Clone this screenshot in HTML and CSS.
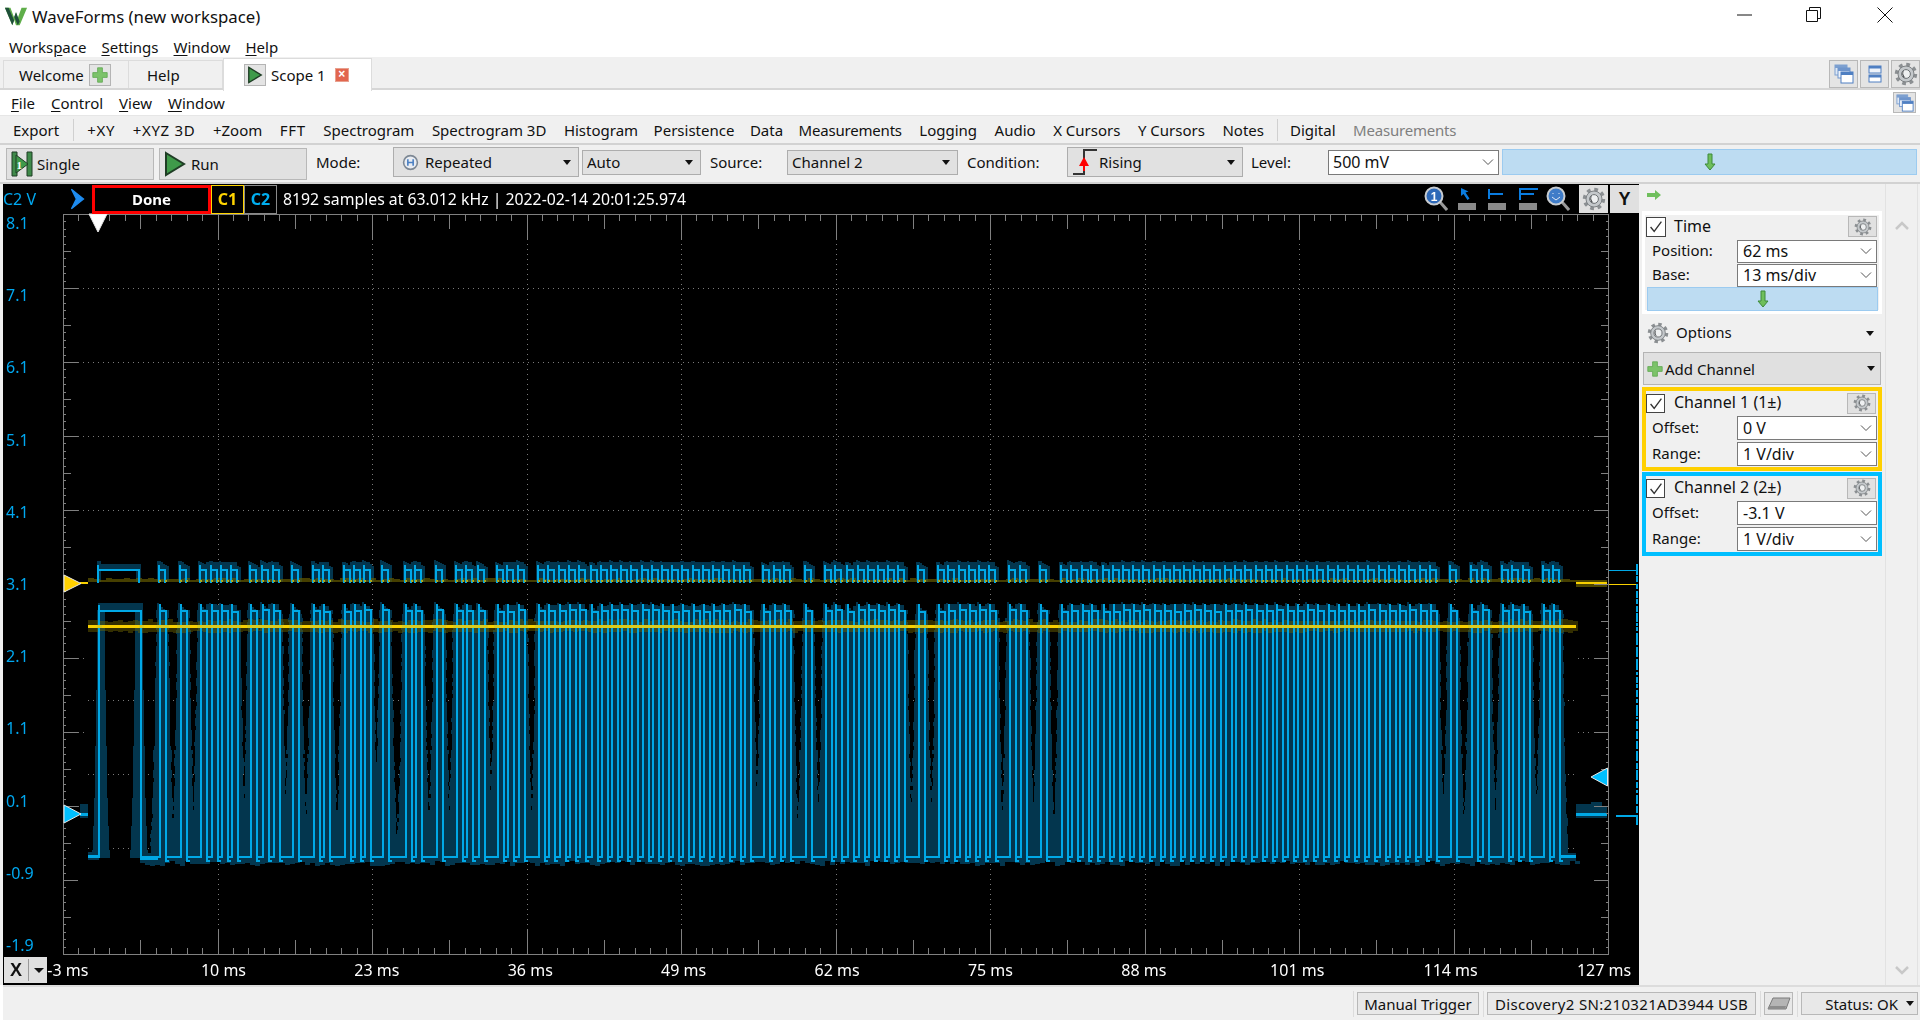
FILE: index.html
```html
<!DOCTYPE html>
<html lang="en">
<head>
<meta charset="utf-8">
<title>WaveForms</title>
<link rel="stylesheet" href="styles.css">
</head>
<body>
<svg class="defs" width="0" height="0" aria-hidden="true">
  <symbol id="gear" viewBox="0 0 24 24">
    <circle cx="12" cy="12" r="9.2" fill="none" stroke="#8b8f92" stroke-width="4" stroke-dasharray="3.6 3.62"/>
    <circle cx="12" cy="12" r="8" fill="#c4c8cb" stroke="#7d8184" stroke-width="1"/>
    <circle cx="12" cy="12" r="4.4" fill="#eef0f1" stroke="#6d7174" stroke-width="1"/>
    <path d="M10 8.6a4 4 0 0 0 1.4 7.2a6 6 0 0 1-1.4-7.2z" fill="#3a3d40"/>
  </symbol>
  <symbol id="chev" viewBox="0 0 12 8"><path d="M1 1.5l5 5 5-5" fill="none" stroke="#555" stroke-width="1"/></symbol>
  <symbol id="plus" viewBox="0 0 20 20"><path d="M7 1h6v6h6v6h-6v6H7v-6H1V7h6z" fill="#7cc36a" stroke="#5fa750" stroke-width="1"/></symbol>
  <symbol id="down" viewBox="0 0 12 18"><path d="M4 1h4v10h3l-5 6-5-6h3z" fill="#6fbf5c" stroke="#3c8a3a" stroke-width="1"/></symbol>
  <symbol id="run" viewBox="0 0 22 26"><path d="M2 2l18 11L2 24z" fill="#3f9a4a" stroke="#1f3d25" stroke-width="2"/></symbol>
  <symbol id="win" viewBox="0 0 20 20">
    <rect x="1" y="1" width="12" height="10" fill="#dfe8f5" stroke="#7da0d0"/><rect x="1" y="1" width="12" height="3" fill="#7da0d0"/>
    <rect x="4" y="4" width="12" height="10" fill="#eef3fa" stroke="#6f95cc"/><rect x="4" y="4" width="12" height="3" fill="#6f95cc"/>
    <rect x="7" y="8" width="12" height="11" fill="#fff" stroke="#4f7fc2"/><rect x="7" y="8" width="12" height="3" fill="#4f7fc2"/>
  </symbol>
</svg>

<header class="titlebar">
  <svg class="logo" viewBox="0 0 26 22"><path d="M1 2h6l4 11 2-6 2 6 4-11h6l-8 19h-4l-2-6-2 6H9z" fill="#5fae4a"/><path d="M1 2h4l6 14-2 5z M13 7l4 10-2 4-4-9z" fill="#1f4f3a"/></svg>
  <span class="title">WaveForms (new workspace)</span>
  <div class="winctl">
    <svg viewBox="0 0 16 16" class="wc wc-min"><path d="M0 8h15" stroke="#111" fill="none"/></svg>
    <svg viewBox="0 0 16 16" class="wc wc-max"><path d="M3.5 3.5V.5h11v11h-3M.5 3.5h11v11H.5z" stroke="#111" fill="none"/></svg>
    <svg viewBox="0 0 16 16" class="wc wc-close"><path d="M.5.5l15 15M15.500.5l-15 15" stroke="#111" fill="none"/></svg>
  </div>
</header>

<nav class="menubar">
  <span>Works<u>p</u>ace</span><span><u>S</u>ettings</span><span><u>W</u>indow</span><span><u>H</u>elp</span>
</nav>

<div class="tabbar">
  <div class="tab tab-welcome">Welcome<span class="tabbtn"><svg class="ico16"><use href="#plus"/></svg></span></div>
  <div class="tab tab-help">Help</div>
  <div class="tab tab-active"><span class="tabbtn tabbtn-run"><svg class="ico-run-small"><use href="#run"/></svg></span><span class="tabname">Scope 1</span><span class="tabclose">×</span></div>
  <div class="tab-right">
    <span class="sqbtn"><svg class="ico20"><use href="#win"/></svg></span>
    <span class="sqbtn"><svg class="ico20" viewBox="0 0 20 20"><rect x="4" y="2" width="12" height="7" fill="#eef3fa" stroke="#4f7fc2"/><rect x="4" y="2" width="12" height="2.500" fill="#4f7fc2"/><rect x="4" y="11" width="12" height="7" fill="#fff" stroke="#4f7fc2"/><rect x="4" y="11" width="12" height="2.500" fill="#4f7fc2"/></svg></span>
    <span class="sqbtn"><svg class="ico24"><use href="#gear"/></svg></span>
  </div>
</div>

<nav class="filemenu">
  <span><u>F</u>ile</span><span><u>C</u>ontrol</span><span><u>V</u>iew</span><span><u>W</u>indow</span>
  <span class="sqbtn sqbtn-win"><svg class="ico20"><use href="#win"/></svg></span>
</nav>

<nav class="toolbar">
  <span>Export</span><i class="vsep"></i><span class="roomy">+XY</span><span class="roomy">+XYZ 3D</span><span>+Zoom</span><span class="roomy">FFT</span><span>Spectrogram</span><span>Spectrogram 3D</span><span>Histogram</span><span class="pull">Persistence</span><span class="pull">Data</span><span class="pull tight">Measurements</span><span>Logging</span><span>Audio</span><span>X Cursors</span><span>Y Cursors</span><span>Notes</span><i class="vsep"></i><span class="pull">Digital</span><span class="disabled tight">Measurements</span>
</nav>

<div class="controls">
  <button class="btn btn-single"><svg class="ico-single" viewBox="0 0 22 26"><path d="M1 1h5v24H1zM16 1h5v24h-5z" fill="#3f8a4a" stroke="#1f3d25"/><path d="M5 4l12 9-12 9z" fill="#3f9a4a" stroke="#1f3d25"/><text x="5.500" y="18" class="digit">1</text></svg>Single</button>
  <button class="btn btn-run"><svg class="ico-run"><use href="#run"/></svg>Run</button>
  <label class="lbl lbl-mode">Mode:</label>
  <div class="combo combo-flat combo-mode"><svg class="ico-mode" viewBox="0 0 16 16"><circle cx="8" cy="8" r="6.500" fill="#e8ecf2" stroke="#7d8894" stroke-width="1.500"/><path d="M5.500 5v6M10.500 5v6M5.500 8h5" stroke="#4a7fc2" stroke-width="1.500" fill="none"/></svg>Repeated<i class="caret"></i></div>
  <div class="combo combo-flat combo-auto">Auto<i class="caret"></i></div>
  <label class="lbl lbl-source">Source:</label>
  <div class="combo combo-flat combo-source">Channel 2<i class="caret"></i></div>
  <label class="lbl lbl-cond">Condition:</label>
  <div class="combo combo-flat combo-cond"><svg class="ico-edge" viewBox="0 0 26 28"><path d="M1 26h11V2h13" fill="none" stroke="#333" stroke-width="2"/><path d="M12 9l5 9H7z" fill="#f00"/><path d="M12 18v5" stroke="#f00" stroke-width="2"/></svg>Rising<i class="caret"></i></div>
  <label class="lbl lbl-level">Level:</label>
  <div class="combo combo-edit combo-level"><span>500 mV</span><svg class="chev"><use href="#chev"/></svg></div>
  <div class="bluebar bluebar-top"><svg class="ico-down"><use href="#down"/></svg></div>
</div>

<main class="main">
  <section class="scope">
    <canvas id="plot" class="plot" width="1636" height="801"></canvas>
    <div class="scope-head">
      <span class="unit">C2 V</span>
      <svg class="chevron" viewBox="0 0 14 18"><path d="M2 1l10 8-10 8 4-8z" fill="#1e8cf0" stroke="#1e8cf0"/></svg>
      <span class="done">Done</span>
      <span class="chip chip-c1">C1</span>
      <span class="chip chip-c2">C2</span>
      <span class="info">8192 samples at 63.012 kHz | 2022-02-14 20:01:25.974</span>
      <div class="head-icons">
        <svg class="hico" viewBox="0 0 24 26"><path d="M16 16l7 8" stroke="#9a9a9a" stroke-width="3"/><circle cx="10" cy="10" r="8.500" fill="#2e69b8" stroke="#c8ccd0" stroke-width="2"/><text x="10" y="14.500" class="lens">1</text></svg>
        <svg class="hico" viewBox="0 0 24 26"><path d="M6 2l0 8 2.500-2 4 6 2-1.500-4-6 3-1z" fill="#0a7ce0"/><rect x="3" y="17" width="18" height="7" fill="#8a8a8a"/></svg>
        <svg class="hico" viewBox="0 0 24 26"><path d="M4 3v10M4 8h14" stroke="#0a7ce0" stroke-width="2" fill="none"/><rect x="3" y="17" width="18" height="7" fill="#8a8a8a"/></svg>
        <svg class="hico" viewBox="0 0 24 26"><path d="M4 2v12M4 3h18M4 8h14" stroke="#0a7ce0" stroke-width="2" fill="none"/><rect x="3" y="17" width="18" height="7" fill="#8a8a8a"/></svg>
        <svg class="hico" viewBox="0 0 24 26"><path d="M16 16l7 8" stroke="#9a9a9a" stroke-width="3"/><circle cx="10" cy="10" r="8.500" fill="#3f7cc8" stroke="#c8ccd0" stroke-width="2"/><path d="M6 11l4 3 4-3M7 7v1M13 7v1" stroke="#dfe8f5" fill="none"/></svg>
      </div>
      <span class="headbtn headbtn-gear"><svg class="ico24"><use href="#gear"/></svg></span>
      <span class="headbtn headbtn-y">Y</span>
    </div>
    <div class="plot-body">
      <div class="ylabels"><span>8.1</span><span>7.1</span><span>6.1</span><span>5.1</span><span>4.1</span><span>3.1</span><span>2.1</span><span>1.1</span><span>0.1</span><span>-0.9</span><span>-1.9</span></div>
    </div>
    <div class="xlabels"><span class="xfirst">-3 ms</span><span>10 ms</span><span>23 ms</span><span>36 ms</span><span>49 ms</span><span>62 ms</span><span>75 ms</span><span>88 ms</span><span>101 ms</span><span>114 ms</span><span>127 ms</span></div>
    <div class="xbtn"><b>X</b><i class="caret"></i></div>
  </section>

  <aside class="panel">
    <div class="panel-col">
      <div class="panel-arrow"><svg class="ico-right" viewBox="0 0 16 10"><path d="M1 3h8V0l6 5-6 5V7H1z" fill="#6fbf5c"/></svg></div>
      <div class="box box-time">
        <div class="box-head"><span class="check"><svg viewBox="0 0 20 20"><path d="M4 10l4 5 8-11" fill="none" stroke="#333" stroke-width="1.500"/></svg></span><span class="box-title">Time</span><span class="gearbtn"><svg class="ico18"><use href="#gear"/></svg></span></div>
        <div class="prop prop-tight"><label>Position:</label><div class="combo combo-edit"><span>62 ms</span><svg class="chev"><use href="#chev"/></svg></div></div>
        <div class="prop prop-tight"><label>Base:</label><div class="combo combo-edit"><span>13 ms/div</span><svg class="chev"><use href="#chev"/></svg></div></div>
        <div class="bluebar bluebar-side"><svg class="ico-down"><use href="#down"/></svg></div>
      </div>
      <div class="options"><svg class="ico22"><use href="#gear"/></svg><span>Options</span><i class="caret"></i></div>
      <div class="addch"><svg class="ico16"><use href="#plus"/></svg><span>Add Channel</span><i class="caret"></i></div>
      <div class="box box-ch box-c1">
        <div class="box-head"><span class="check"><svg viewBox="0 0 20 20"><path d="M4 10l4 5 8-11" fill="none" stroke="#333" stroke-width="1.500"/></svg></span><span class="box-title">Channel 1 (1±)</span><span class="gearbtn"><svg class="ico18"><use href="#gear"/></svg></span></div>
        <div class="prop"><label>Offset:</label><div class="combo combo-edit"><span>0 V</span><svg class="chev"><use href="#chev"/></svg></div></div>
        <div class="prop"><label>Range:</label><div class="combo combo-edit"><span>1 V/div</span><svg class="chev"><use href="#chev"/></svg></div></div>
      </div>
      <div class="box box-ch box-c2">
        <div class="box-head"><span class="check"><svg viewBox="0 0 20 20"><path d="M4 10l4 5 8-11" fill="none" stroke="#333" stroke-width="1.500"/></svg></span><span class="box-title">Channel 2 (2±)</span><span class="gearbtn"><svg class="ico18"><use href="#gear"/></svg></span></div>
        <div class="prop"><label>Offset:</label><div class="combo combo-edit"><span>-3.1 V</span><svg class="chev"><use href="#chev"/></svg></div></div>
        <div class="prop"><label>Range:</label><div class="combo combo-edit"><span>1 V/div</span><svg class="chev"><use href="#chev"/></svg></div></div>
      </div>
    </div>
    <div class="scrollcol">
      <svg class="scrollarrow" viewBox="0 0 14 9"><path d="M1 8l6-6 6 6" fill="none" stroke="#c8c8c8" stroke-width="2.500"/></svg>
      <svg class="scrollarrow" viewBox="0 0 14 9"><path d="M1 1l6 6 6-6" fill="none" stroke="#c8c8c8" stroke-width="2.500"/></svg>
    </div>
  </aside>
</main>

<footer class="statusbar">
  <i class="ssep"></i><span class="sbtn sbtn-trigger">Manual Trigger</span>
  <i class="ssep"></i><span class="sbtn sbtn-dev">Discovery2 SN:210321AD3944 USB</span>
  <i class="ssep"></i><span class="sbtn sbtn-ico"><svg class="ico-disk" viewBox="0 0 24 14"><path d="M6 1h17l-4 11H1z" fill="#b5b5b5" stroke="#7a7a7a"/><path d="M1 12l1-3h17l-1 3z" fill="#8d8d8d"/></svg></span>
  <i class="ssep"></i><span class="sbtn sbtn-status">Status: OK<i class="caret"></i></span>
</footer>
<script src="script.js"></script>
</body>
</html>
```

FILE: styles.css
```css
* { box-sizing: border-box; }
html, body { margin: 0; padding: 0; }
body {
  width: 1920px; height: 1020px; overflow: hidden;
  display: flex; flex-direction: column;
  background: #fff; color: #111;
  font: 15px/20px "Noto Sans", sans-serif;
}
.defs { position: absolute; }
u { text-underline-offset: 2px; }
i { display: block; font-style: normal; }

.titlebar { height: 36px; flex: none; display: flex; align-items: center; padding-left: 4px; }
.logo { width: 24px; height: 22px; margin-top: -4px; }
.title { margin-left: 4px; margin-top: -3px; font-size: 16.800px; }
.winctl { margin-left: auto; display: flex; margin-right: 27px; margin-top: -6px; }
.wc { width: 16px; height: 16px; display: block; }
.wc-max { margin-left: 53px; }
.wc-close { margin-left: 55px; }

.menubar { height: 21px; flex: none; display: flex; gap: 15px; padding-left: 9px; align-items: center; }

.tabbar { height: 33px; flex: none; display: flex; background: #f0f0f0; border-bottom: 2px solid #d6d6d6; padding-left: 3px; }
.tab { height: 31px; display: flex; align-items: center; }
.tab-welcome { width: 126px; padding-left: 15px; border: 1px solid #dcdcdc; border-bottom: 0; margin-top: 3px; height: 28px; }
.tab-help { width: 94px; padding-left: 18px; border-right: 1px solid #dcdcdc; border-top: 1px solid #dcdcdc; margin-top: 3px; height: 28px; }
.tab-active { width: 149px; height: 33px; background: #fff; border: 1px solid #dcdcdc; border-bottom: 0; padding-left: 20px; margin-top: 1px; }
.tabbtn { width: 22px; height: 22px; background: #e4e4e4; border: 1px solid #b4b4b4; display: flex; align-items: center; justify-content: center; margin-left: 5px; }
.tabbtn-run { margin-left: 0; }
.tabname { margin-left: 5px; }
.tabclose { width: 14px; height: 14px; margin-left: 9px; background: #e2664e; border: 1px solid #e8a08f; color: #fff; font: bold 12px/11px "Liberation Sans", sans-serif; text-align: center; }
.ico16 { width: 16px; height: 16px; display: block; }
.ico18 { width: 18px; height: 18px; display: block; }
.ico20 { width: 20px; height: 20px; display: block; }
.ico22 { width: 22px; height: 22px; display: block; }
.ico24 { width: 24px; height: 24px; display: block; }
.ico-run-small { width: 16px; height: 18px; display: block; }
.tab-right { margin-left: auto; display: flex; gap: 2px; margin-top: 3px; }
.sqbtn { width: 29px; height: 28px; background: #e4e4e4; border: 1px solid #b8b8b8; display: flex; align-items: center; justify-content: center; }

.filemenu { height: 25px; flex: none; display: flex; gap: 16px; padding-left: 11px; align-items: center; position: relative; }
.sqbtn-win { position: absolute; right: 4px; top: 2px; width: 23px; height: 21px; }
.sqbtn-win .ico20 { width: 18px; height: 18px; }

.toolbar { height: 30px; flex: none; display: flex; gap: 17.5px; align-items: center; padding-left: 13px; background: #f0f0f0; border-top: 1px solid #e6e6e6; border-bottom: 2px solid #d2d2d2; }
.roomy { letter-spacing: .7px; }
.pull { margin-left: -2px; }
.tight { letter-spacing: -.2px; }
.vsep { width: 1px; height: 22px; background: #d0d0d0; margin: 0 -4px 0 -4px; }
.disabled { color: #7f7f7f; }

.controls { height: 39px; flex: none; display: flex; align-items: center; padding-left: 6px; background: #f0f0f0; border-bottom: 2px solid #d2d2d2; }
.btn { height: 32px; background: #e1e1e1; border: 1px solid #b8b8b8; padding: 0 0 0 4px; display: flex; align-items: center; font: inherit; color: inherit; }
.btn-single { width: 148px; }
.btn-run { width: 148px; margin-left: 5px; }
.ico-single { width: 22px; height: 26px; margin-right: 4px; }
.ico-run { width: 22px; height: 26px; margin-right: 5px; display: block; }
.digit { font: bold 11px "Liberation Serif", serif; fill: #fff; }
.lens { font: bold 12px "Liberation Sans", sans-serif; fill: #fff; text-anchor: middle; }
.lbl { display: block; flex: none; margin-bottom: 3px; }
.lbl-mode { width: 77px; margin-left: 9px; }
.lbl-source { width: 77px; margin-left: 9px; }
.lbl-cond { width: 100px; margin-left: 9px; }
.lbl-level { width: 77px; margin-left: 8px; }
.combo { display: flex; align-items: center; flex: none; padding-left: 4px; }
.combo-flat { background: #e1e1e1; border: 1px solid #adadad; height: 25px; margin-bottom: 3px; }
.combo-mode { width: 186px; height: 30px; padding-left: 8px; }
.combo-auto { width: 119px; margin-left: 3px; }
.combo-source { width: 171px; }
.combo-cond { width: 176px; height: 30px; padding-left: 4px; }
.caret { width: 0; height: 0; border: 4px solid transparent; border-top: 5px solid #111; border-bottom: 0; margin-left: auto; margin-right: 7px; }
.ico-mode { width: 17px; height: 17px; margin-right: 6px; }
.ico-edge { width: 26px; height: 28px; margin-right: 1px; }
.combo-edit { background: #fff; border: 1px solid #7a7a7a; height: 25px; font-size: 16px; }
.combo-level { width: 171px; margin-bottom: 3px; }
.chev { width: 12px; height: 8px; margin-left: auto; margin-right: 4px; display: block; }
.bluebar { background: #bddcf2; border: 1px solid #9ccbf0; display: flex; align-items: center; justify-content: center; }
.bluebar-top { width: 415px; height: 26px; margin-left: 3px; margin-bottom: 3px; }
.ico-down { width: 12px; height: 18px; display: block; }

.main { flex: none; height: 801px; display: flex; background: #f0f0f0; padding-left: 3px; }
.scope { width: 1636px; flex: none; background: #000; color: #fff; position: relative; display: flex; flex-direction: column; font-size: 16px; }
.plot { position: absolute; left: 0; top: 0; }
.scope-head { height: 30px; flex: none; display: flex; align-items: center; position: relative; }
.unit { width: 68px; color: #00a8f0; }
.chevron { width: 17px; height: 22px; margin-left: -2px; }
.done { width: 119px; height: 29px; margin-left: 6px; border: 3px solid #f00; font-size: 15px; font-weight: 700; text-align: center; line-height: 22px; }
.chip { width: 33px; height: 29px; border: 1px solid #ffd400; font-weight: 700; text-align: center; line-height: 26px; }
.chip-c1 { color: #ffd400; }
.chip-c2 { color: #00aeef; border-color: #8a8a8a; }
.info { margin-left: 6px; white-space: nowrap; font-size: 15.800px; }
.head-icons { margin-left: auto; display: flex; gap: 6.500px; }
.hico { width: 24px; height: 26px; display: block; }
.headbtn { width: 29px; height: 28px; background: #e0e0e0; display: flex; align-items: center; justify-content: center; color: #111; }
.headbtn-gear { margin-left: 9px; }
.headbtn-y { margin-left: 2px; font: bold 18px "Liberation Sans", sans-serif; }
.plot-body { flex: none; height: 740px; position: relative; }
.ylabels { height: 743px; margin-top: -2px; padding-top: 1px; display: flex; flex-direction: column; justify-content: space-between; color: #00a8f0; padding-left: 3px; width: 60px; }
.ylabels span { display: block; height: 20px; }
.xlabels { height: 31px; flex: none; display: grid; grid-template-columns: 143.800px repeat(10, 153.400px); text-align: center; align-items: center; position: relative; }
.xfirst { padding-right: 14px; }
.xbtn { position: absolute; left: 1px; bottom: 2px; width: 43px; height: 26px; background: #e0e0e0; color: #111; display: flex; align-items: center; font-size: 18px; }
.xbtn b { width: 25px; text-align: center; border-right: 1px solid #999; height: 22px; line-height: 22px; font-family: "Liberation Sans", sans-serif; }
.xbtn .caret { margin-left: 5px; border-top-width: 5px; border-left-width: 5px; border-right-width: 5px; margin-right: 0; }

.panel { width: 281px; flex: none; display: flex; }
.panel-col { width: 243px; padding-left: 3px; flex: none; }
.panel-arrow { height: 27px; padding: 6px 0 0 4px; }
.ico-right { width: 16px; height: 10px; display: block; }
.box { width: 240px; }
.box-head { display: flex; align-items: center; height: 21px; }
.check { width: 20px; height: 20px; background: #fff; border: 1px solid #444; display: block; flex: none; }
.check svg { display: block; width: 18px; height: 18px; }
.box-title { margin-left: 8px; margin-top: -2px; font-size: 16px; }
.gearbtn { margin-left: auto; width: 29px; height: 21px; background: #e1e1e1; border: 1px solid #b8b8b8; display: flex; align-items: center; justify-content: center; margin-right: 1px; }
.prop { display: flex; align-items: center; }
.prop label { width: 85px; margin-left: 6px; margin-top: -2px; flex: none; }
.prop .combo { width: 140px; padding-left: 5px; }
.box-time { height: 103px; background: linear-gradient(#f0f0f0, #f0f0f0) padding-box; border: 4px solid #fff; border-left-width: 3px; border-right-width: 3px; padding: 1px 1px 0 1px; }
.box-time .prop { height: 24px; }
.box-time .prop .combo { height: 23px; }
.box-time .box-head { margin-bottom: 2px; }
.bluebar-side { width: 231px; height: 24px; margin-left: 1px; }
.options { height: 38px; display: flex; align-items: center; padding: 0 6px 0 5px; }
.options span { margin-left: 7px; margin-top: -2px; }
.options .caret { margin-right: 2px; }
.addch { height: 33px; width: 238px; margin-left: 1px; background: #e0e0e0; border: 1px solid #b4b4b4; display: flex; align-items: center; padding-left: 3px; }
.addch span { margin-left: 2px; }
.addch .caret { margin-right: 5px; }
.box-ch { padding: 1px 0 0 0; border: 4px solid; margin-top: 1px; background: #f0f0f0; }
.box-c1 { border-color: #ffd000; margin-top: 2px; height: 84px; }
.box-c2 { border-color: #00bfff; height: 84px; }
.box-ch .box-head { padding-right: 1px; height: 22px; margin-bottom: 1px; }
.box-ch .check { width: 19px; height: 19px; margin-left: 0; }
.box-ch .prop { height: 25px; margin-bottom: 1px; }
.box-ch .prop .combo { height: 24px; }
.box-ch .box-title { margin-left: 9px; }
.scrollcol { margin-left: 3px; flex: 1; border-left: 1px solid #e2e2e2; border-right: 1px solid #e2e2e2; display: flex; flex-direction: column; justify-content: space-between; align-items: center; padding: 37px 0 10px; margin-right: 2px; }
.scrollarrow { width: 14px; height: 9px; display: block; }

.statusbar { flex: 1; display: flex; align-items: center; justify-content: flex-end; background: #f0f0f0; border-top: 2px solid #dcdcdc; margin-left: 3px; padding-right: 2px; gap: 3.500px; }
.ssep { width: 1px; height: 26px; background: #dcdcdc; }
.sbtn { height: 23px; background: #e8e8e8; border: 1px solid #b8b8b8; display: flex; align-items: center; justify-content: center; white-space: nowrap; }
.sbtn-trigger { width: 122px; }
.sbtn-dev { width: 269px; letter-spacing: .33px; }
.sbtn-ico { width: 29px; }
.sbtn-status { width: 117px; justify-content: flex-end; }
.sbtn-status .caret { margin-left: 8px; margin-right: 3px; }
.ico-disk { width: 24px; height: 14px; }
```

FILE: script.js
```js
(function () {
  var c = document.getElementById('plot').getContext('2d');
  c.translate(-3, -184);
  function r(col, x, y, w, h) { c.fillStyle = col; c.fillRect(x, y, w, h); }
  function hash(n) { var s = Math.sin(n * 12.9898) * 43758.5453; return s - Math.floor(s); }

  var L = 63, R = 1608, T = 214, B = 954, G = '#808080', GD = '#7a7a7a';
  var P = [158,179,199,210,220,230,249,261,272,291,312,322,343,353,363,381,404,414,435,455,465,477,496,506,517,537,547,558,568,578,
    590,600,610,620,630,641,651,661,671,681,692,702,712,722,733,743,762,773,783,804,824,834,846,857,867,877,887,897,917,937,947,958,968,978,988,1008,1019,1039,1060,1070,1081,
    1090,1102,1112,1122,1132,1142,1153,1163,1173,1183,1193,1203,1213,1224,1234,1244,1255,1265,1275,1286,1296,1306,1316,1327,1337,1347,1357,1367,1378,1388,1398,1408,1419,1429,1449,1470,1481,1501,1511,1522,1542,1552];
  var ENV = '#03364e', BLUE = '#00a8e6', YEL = '#f8d000';

  // grid
  var i, y, x;
  for (i = 1; i < 10; i++) {
    x = Math.round(L + i * 154.5);
    for (y = T + 25; y < B - 25; y += 5) r(GD, x, y, 1, 1);
  }
  function hdots(y, x0, x1) { for (var q = x0; q < x1; q += 5) r(GD, q, y, 1, 1); }
  [288, 362, 436, 510].forEach(function (v) { hdots(v, L + 15, R - 15); });
  [700, 774, 848].forEach(function (v) { hdots(v, 88, 1575); });
  [658, 732, 806].forEach(function (v) { hdots(v, 78, 88); hdots(v, 1578, 1593); });

  // lower trace envelope
  function taper(y) {
    if (y < 700) return 1 + (y - 605) / 95;
    if (y < 800) return 2 + (y - 700) / 40;
    return 4.500 + (y - 800) / 20;
  }
  function envelope(x) {
    var dx, yy, t;
    for (yy = 610; yy < 856; yy += 4) {
      t = Math.round(taper(yy) + hash(x + yy) * 1.5);
      r(ENV, x - t, yy, 8 + t * 2 + 1, 4);
    }
    for (dx = 0; dx < 10; dx += 2) r(ENV, x - 1 + dx, 602 + dx + Math.round(hash(x) * 2), 2, 12);
  }
  P.forEach(envelope);
  // wide pulse envelope
  [98, 136].forEach(function (x) {
    for (var yy = 610; yy < 856; yy += 4) {
      var t = Math.round(taper(yy) * 0.8);
      r(ENV, x - t, yy, 6 + t * 2, 4);
    }
  });
  r(ENV, 98, 603, 45, 7);
  r(ENV, 88, 852, 11, 8);
  // bottom envelope strip
  r(ENV, 140, 853, 1436, 8);
  for (x = 140; x < 1576; x += 5) r(ENV, x, 861, 5, Math.round(hash(x) * 5));
  // dark filling between close pulses on top
  for (i = 0; i < P.length - 1; i++) {
    if (P[i + 1] - P[i] < 12) r(ENV, P[i] + 7, 604 + Math.round(hash(i) * 2), P[i + 1] - P[i], 8);
  }

  // upper band envelope
  function upEnv(x) {
    for (var dx = -1; dx < 10; dx += 2) {
      var yt = 560 + Math.max(0, dx) * 0.6 + hash(x) * 2;
      r(ENV, x + dx, Math.round(yt), 2, 582 - Math.round(yt));
    }
  }
  P.forEach(upEnv);
  r(ENV, 97, 561, 4, 21); r(ENV, 97, 564, 44, 5); r(ENV, 136, 566, 5, 16);
  for (i = 0; i < P.length - 1; i++) {
    if (P[i + 1] - P[i] < 12) r(ENV, P[i] + 7, 562, P[i + 1] - P[i], 20);
  }
  // olive ground on upper band
  for (x = 88; x < 1576; x += 6) {
    var hh = 2 + Math.round(hash(x * 3) * 2);
    r('rgba(100,90,0,.7)', x, 582 - hh, 6, hh);
  }

  // olive envelope round the lower yellow trace
  for (x = 88; x < 1576; x += 5) {
    var j = Math.round(hash(x * 1.7) * 3);
    r('rgba(112,102,0,.45)', x, 622 - j, 5, 9 + j + Math.round(hash(x) * 2));
  }

  // blue traces
  function pulse(x, x2, yTop, yShoulder, yLow, yDip) {
    r(BLUE, x, yTop, 2, yLow - yTop + 2);
    r(BLUE, x, yShoulder, x2 - x + 2, 2);
    r(BLUE, x2, yShoulder, 2, yDip - yShoulder + 2);
    if (yDip !== yLow) r(BLUE, x2, yDip, 4, 2);
  }
  r(BLUE, 88, 855, 11, 3);
  pulse(98, 140, 605, 610, 856, 856);
  r(BLUE, 140, 858, 18, 2);
  var last = 140;
  P.forEach(function (p) {
    var x = p + 1;
    r(BLUE, last + 2, 856, x - last, 2);
    pulse(x, x + 6, 604, 609 + Math.round(hash(p) * 2), 856, 860);
    last = x + 6;
  });
  r(BLUE, last, 855, 1576 - last, 3);

  // upper band pulses
  pulse(97, 138, 565, 569, 581, 581);
  P.forEach(function (p) { pulse(p, p + 6, 565, 569, 581, 581); });

  // yellow traces
  function inPulse(x) {
    for (var k = 0; k < P.length; k++) if (x >= P[k] - 2 && x <= P[k] + 10) return true;
    return false;
  }
  for (x = 88; x < 1576; x += 1) {
    r(inPulse(x) || (x > 96 && x < 102) || (x > 138 && x < 144) ? '#d8cc20' : YEL, x, 625, 1, 3);
  }
  P.forEach(function (p) { r('#a8a820', p + 1, 580, 2, 2); r('#a8a820', p + 7, 580, 2, 2); });

  // tails
  r(ENV, 80, 804, 8, 14); r(BLUE, 80, 813, 8, 3);
  r(ENV, 1576, 804, 15, 14); r(ENV, 1591, 802, 11, 16); r(ENV, 1602, 806, 5, 12); r(BLUE, 1576, 813, 31, 3);
  r('rgba(110,100,0,.7)', 1576, 580, 31, 7); r(YEL, 1576, 582, 31, 2); r(YEL, 80, 582, 8, 2);

  // overview strip on the right of the axis
  r(BLUE, 1608, 570, 28, 1); r(YEL, 1608, 584, 28, 1); r(BLUE, 1616, 815, 20, 2);
  for (y = 564; y < 822;) {
    var len = 2 + Math.round(hash(y) * 10);
    r(BLUE, 1636, y, 2, len);
    y += len + 1 + Math.round(hash(y + 1) * 1.5);
  }

  // axes and ticks
  r(G, L, T, R - L + 1, 1); r(G, L, B, R - L + 1, 1); r(G, L, T, 1, B - T + 1); r(G, R, T, 1, B - T + 1);
  for (i = 1; i < 100; i++) {
    y = Math.round(T + i * 7.4);
    var ly = i % 10 === 0 ? 15 : i % 5 === 0 ? 8 : 3;
    r(G, L, y, ly, 1); r(G, R - ly + 1, y, ly, 1);
  }
  for (i = 1; i < 100; i++) {
    x = Math.round(L + i * 15.45);
    var lx = i % 10 === 0 ? 26 : i % 5 === 0 ? 15 : 7;
    r(G, x, T, 1, lx); r(G, x, B - lx + 1, 1, lx);
  }

  // markers
  function tri(pts, fill) {
    c.beginPath(); c.moveTo(pts[0], pts[1]); c.lineTo(pts[2], pts[3]); c.lineTo(pts[4], pts[5]); c.closePath();
    c.fillStyle = fill; c.fill(); c.strokeStyle = '#e8e8e8'; c.lineWidth = 1; c.stroke();
  }
  tri([64, 575, 81, 583.500, 64, 592], '#ffd000');
  tri([64, 805, 81, 814, 64, 823], '#00bfff');
  tri([1607.500, 768, 1591, 777, 1607.500, 786], '#00bfff');
  tri([89, 214, 107, 214, 98, 232], '#fff');
})();
```
